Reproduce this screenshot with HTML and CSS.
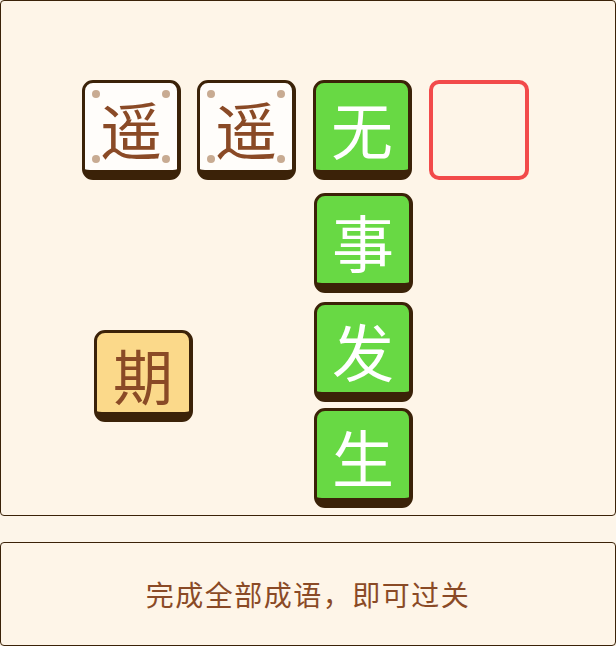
FILE: index.html
```html
<!DOCTYPE html>
<html lang="zh">
<head>
<meta charset="utf-8">
<title>成语</title>
<link rel="stylesheet" href="styles.css">
</head>
<body>
<main class="page">
  <section class="board">
    <div class="tile tile-fixed pos-a1"><span class="dot tl"></span><span class="dot tr"></span><span class="dot bl"></span><span class="dot br"></span>遥</div>
    <div class="tile tile-fixed pos-a2"><span class="dot tl"></span><span class="dot tr"></span><span class="dot bl"></span><span class="dot br"></span>遥</div>
    <div class="tile tile-done pos-a3">无</div>
    <div class="slot pos-a4"></div>
    <div class="tile tile-done pos-b3">事</div>
    <div class="tile tile-done pos-c3">发</div>
    <div class="tile tile-done pos-d3">生</div>
    <div class="tile tile-pick pos-pick">期</div>
  </section>
  <section class="hint">
    <p class="hint-text">完成全部成语，即可过关</p>
  </section>
</main>
</body>
</html>
```

FILE: styles.css
```css
* { box-sizing: border-box; }

html, body {
  margin: 0;
  padding: 0;
  background: #fdf5e9;
}

body {
  font-family: "Noto Sans CJK SC", "Noto Sans", sans-serif;
  width: 616px;
  height: 646px;
  overflow: hidden;
}

.page {
  display: flex;
  flex-direction: column;
  gap: 26px;
}

.board {
  position: relative;
  height: 516px;
  border: 1px solid #3b2208;
  border-radius: 4px;
  background: #fef5e8;
}

.hint {
  height: 104px;
  border: 1px solid #3b2208;
  border-radius: 4px;
  background: #fef5e8;
  display: flex;
  align-items: center;
  justify-content: center;
}

.hint-text {
  margin: 0;
  font-size: 28px;
  font-weight: 400;
  line-height: 1;
  color: #8a4a26;
  letter-spacing: 1.5px;
}

.tile {
  position: absolute;
  width: 99px;
  height: 100px;
  border-style: solid;
  border-color: #3b2208;
  border-width: 3px 4px 10px 3px;
  border-radius: 11px;
  display: flex;
  align-items: center;
  justify-content: center;
  font-size: 62px;
  font-weight: 400;
  line-height: 1;
  padding-top: 3px;
}

.tile-fixed {
  background: #fffdfa;
  color: #8a4a26;
}

.tile-done {
  background: #68d944;
  color: #ffffff;
}

.tile-pick {
  background: #fbd98a;
  color: #8a4a26;
  height: 92px;
  font-size: 60px;
}

.slot {
  position: absolute;
  width: 100px;
  height: 100px;
  border: 4px solid #f24a4a;
  border-radius: 10px;
}

.dot {
  position: absolute;
  width: 8px;
  height: 8px;
  border-radius: 50%;
  background: #c8ab92;
}
.dot.tl { left: 7px; top: 7px; }
.dot.tr { right: 7px; top: 7px; }
.dot.bl { left: 7px; bottom: 7px; }
.dot.br { right: 7px; bottom: 7px; }

.pos-a1 { left: 81px; top: 79px; }
.pos-a2 { left: 196px; top: 79px; }
.pos-a3 { left: 312px; top: 79px; }
.pos-a4 { left: 428px; top: 79px; }
.pos-b3 { left: 313px; top: 192px; }
.pos-c3 { left: 313px; top: 301px; }
.pos-d3 { left: 313px; top: 407px; }
.pos-pick { left: 93px; top: 329px; }
```
